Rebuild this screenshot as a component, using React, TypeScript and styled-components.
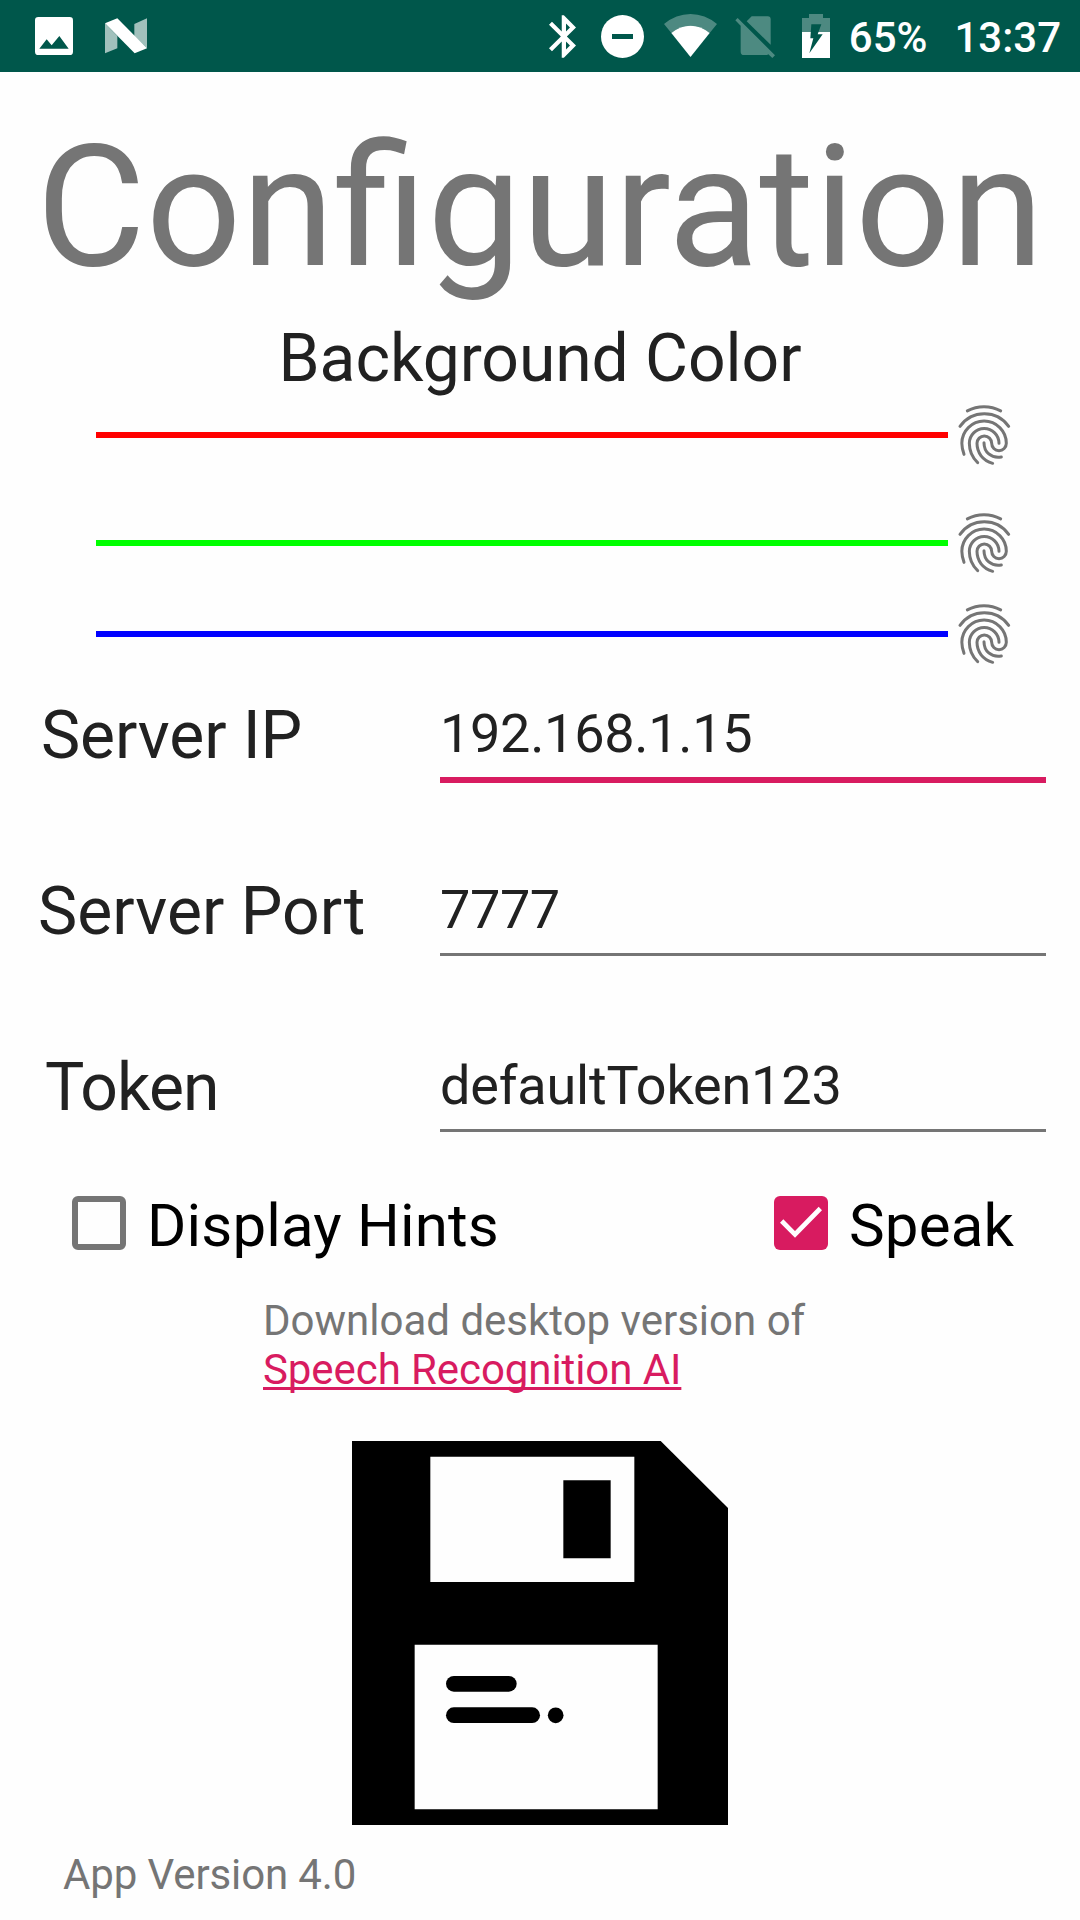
import React, { useState } from "react";
import styled, { createGlobalStyle } from "styled-components";

const GREEN = "#00574b";
const PINK = "#d81b60";
const GRAY = "#757575";
const INK = "#212121";

const GlobalStyle = createGlobalStyle`
  * { box-sizing: border-box; }
  body {
    margin: 0;
    background: #fefefe;
    font-family: Roboto, "Noto Sans", sans-serif;
  }
`;

const Screen = styled.div`
  width: 1080px;
  height: 1920px;
  overflow: hidden;
  display: flex;
  flex-direction: column;
  background: #fefefe;
`;

const StatusBar = styled.header`
  height: 72px;
  flex: none;
  display: flex;
  align-items: flex-start;
  padding: 0 19px 0 35px;
  background: ${GREEN};
  color: #fff;
`;

const Spacer = styled.div`
  flex: 1;
`;

const Glyph = styled.svg<{ $w: number; $h: number; $top: number; $right: number }>`
  display: block;
  flex: none;
  width: ${(p) => p.$w}px;
  height: ${(p) => p.$h}px;
  margin: ${(p) => p.$top}px ${(p) => p.$right}px 0 0;
`;

const StatusText = styled.span<{ $right?: number }>`
  font-size: 42px;
  font-weight: 500;
  line-height: 50px;
  margin-top: 13px;
  margin-right: ${(p) => p.$right ?? 0}px;
  white-space: nowrap;
`;

const Title = styled.h1`
  margin: 0;
  height: 230px;
  padding-top: 37px;
  font-size: 168px;
  font-weight: 400;
  line-height: 197px;
  text-align: center;
  white-space: nowrap;
  color: ${GRAY};
`;

const Subtitle = styled.h2`
  margin: 0;
  height: 97px;
  padding-top: 18px;
  font-size: 66px;
  font-weight: 400;
  line-height: 78px;
  letter-spacing: -0.06px;
  text-align: center;
  color: ${INK};
`;

const SliderRow = styled.div<{ $gap: number }>`
  display: flex;
  align-items: center;
  height: 72px;
  margin: 0 60px ${(p) => p.$gap}px 96px;
`;

const Track = styled.div<{ $color: string }>`
  flex: 1;
  height: 6px;
  background: ${(p) => p.$color};
`;

const Thumb = styled.svg`
  width: 72px;
  height: 72px;
  flex: none;
`;

const Form = styled.form`
  display: flex;
  flex-direction: column;
  padding-right: 34px;
`;

const Field = styled.div`
  display: flex;
  height: 176px;

  &:last-child {
    height: 140px;
  }
`;

const Label = styled.label<{ $indent: number; $tracking: number }>`
  width: 440px;
  padding-left: ${(p) => p.$indent}px;
  font-size: 66px;
  line-height: 73px;
  letter-spacing: ${(p) => p.$tracking}px;
  white-space: nowrap;
  color: ${INK};
`;

const Input = styled.input<{ $active?: boolean; $tracking: number }>`
  flex: 1;
  min-width: 0;
  height: ${(p) => (p.$active ? 84 : 81)}px;
  padding: 0 0 9px;
  border: 0;
  border-bottom: ${(p) => (p.$active ? `6px solid ${PINK}` : `3px solid ${GRAY}`)};
  outline: 0;
  border-radius: 0;
  background: transparent;
  font: 400 54px/64px Roboto, "Noto Sans", sans-serif;
  letter-spacing: ${(p) => p.$tracking}px;
  color: ${INK};
`;

const Options = styled.div`
  display: flex;
  justify-content: space-between;
  height: 78px;
  padding: 0 66px 0 72px;
`;

const Option = styled.label`
  display: flex;
  align-items: flex-start;
  font-size: 60px;
  line-height: 69px;
  letter-spacing: 0.16px;
  color: #000;
  white-space: nowrap;
`;

const Box = styled.button<{ $on: boolean }>`
  width: 54px;
  height: 54px;
  margin: 5px 21px 0 0;
  padding: 0;
  border: ${(p) => (p.$on ? "0" : `6px solid ${GRAY}`)};
  border-radius: 6px;
  background: ${(p) => (p.$on ? PINK : "transparent")};
  svg { display: block; }
`;

const Download = styled.p`
  margin: 0;
  height: 172px;
  padding: 27px 0 0 263px;
  font-size: 42px;
  line-height: 49px;
  color: ${GRAY};
`;

const Link = styled.a`
  color: ${PINK};
  letter-spacing: -0.08px;
  text-decoration: underline;
  text-decoration-thickness: 3px;
  text-underline-offset: 3px;
  text-decoration-skip-ink: none;
`;

const SaveButton = styled.button`
  display: block;
  align-self: center;
  margin: 0 0 25px;
  padding: 0;
  border: 0;
  background: none;
  svg { display: block; }
`;

const Version = styled.footer`
  padding-left: 63px;
  font-size: 42px;
  line-height: 49px;
  letter-spacing: -0.12px;
  color: ${GRAY};
`;

const Fingerprint = () => (
  <Thumb viewBox="54 27 216 216" fill="none" stroke={GRAY} strokeWidth="9" strokeLinecap="round">
    <path d="M112 62.500A108 108 0 0 1 212 62.500" />
    <path d="M90 109A89 89 0 0 1 236 109" />
    <path d="M102 193Q95.500 174 95.500 160A66.500 66.500 0 0 1 229 160A21.500 21.500 0 0 1 185 160A22 22 0 0 0 141 160C141 188 158 212 188 220" />
    <path d="M207 160A44.500 44.500 0 0 0 118 160C118 184 127 203 143 218" />
    <path d="M162 158C162 186 183 206 214 201" />
  </Thumb>
);

const Check = () => (
  <svg width="54" height="54" viewBox="102 78 162 162" fill="none" stroke="#fefefe" strokeWidth="14">
    <path d="M125 153L165 193L241 115.500" />
  </svg>
);

const Floppy = () => (
  <svg width="376" height="384" viewBox="66 63 1128 1152">
    <path d="M66 63H992L1194 264V1215H66Z" />
    <path fill="#fefefe" d="M301 110H913V486H301ZM254 674H983V1168H254Z" />
    <path d="M700 181H842V415H700Z" />
    <rect x="348" y="768" width="212" height="47" rx="23.500" />
    <rect x="348" y="862" width="282" height="47" rx="23.500" />
    <circle cx="677" cy="886" r="23.500" />
  </svg>
);

const StatusIcons = () => (
  <>
    <Glyph $w={27} $h={43} $top={15} $right={25} viewBox="5 2 12.71 20" fill="#fff">
      <path d="M17.71 7.71L12 2h-1v7.59L6.410 5 5 6.410 10.590 12 5 17.590 6.410 19 11 14.410V22h1l5.710-5.710-4.300-4.290 4.300-4.290zM13 5.830l1.880 1.880L13 9.590V5.830zm1.880 10.460L13 18.170v-3.760l1.880 1.880z" />
    </Glyph>
    <Glyph $w={43} $h={43} $top={15} $right={20} viewBox="213 45 129 129">
      <circle cx="277.500" cy="109.500" r="64.500" fill="#fff" />
      <path d="M246 102H309V117H246Z" fill={GREEN} />
    </Glyph>
    <Glyph $w={53} $h={43} $top={14} $right={18} viewBox="402 42 159 129" fill="#fff">
      <path d="M481.500 171L539 99Q513 77 481.500 77T424 99L402 72Q438 42 481.500 42T561 72L539 99Z" opacity=".3" />
      <path d="M481.500 171L424 99Q450 77 481.500 77T539 99Z" />
    </Glyph>
    <Glyph $w={40} $h={42} $top={16} $right={27} viewBox="615 48 120 126" fill="#fff" opacity=".3">
      <path d="M665 49H713Q722 49 722 58V134L650 64Z" />
      <path d="M616 61L623 54L735 166L727 174L715 163Q713 165 710 165H642Q632 165 632 155V77Z" />
    </Glyph>
    <Glyph $w={28} $h={44} $top={14} $right={19} viewBox="36 42 84 132" fill="#fff">
      <path opacity=".3" d="M57 54V42H99V54H120V96H36V54Z" />
      <path d="M36 96H120V174H36Z" />
      <path fill={GREEN} d="M64 73H94L83 103H98L58 160L70 115H61Z" />
    </Glyph>
  </>
);

const SLIDERS = [
  { color: "#ff0000", gap: 36 },
  { color: "#00ff00", gap: 19 },
  { color: "#0000ff", gap: 29 },
];

const FIELDS = [
  { id: "ip", label: "Server IP", value: "192.168.1.15", indent: 41, labelTracking: -0.1, tracking: -0.3, active: true },
  { id: "port", label: "Server Port", value: "7777", indent: 38, labelTracking: 0.05, tracking: -0.4, active: false },
  { id: "token", label: "Token", value: "defaultToken123", indent: 45, labelTracking: -0.9, tracking: -0.2, active: false },
];

export default function App() {
  const [hints, setHints] = useState(false);
  const [speak, setSpeak] = useState(true);
  return (
    <Screen>
      <GlobalStyle />
      <StatusBar>
        <Glyph $w={38} $h={38} $top={17} $right={32} viewBox="105 51 114 114">
          <rect x="105" y="51" width="114" height="114" rx="10" fill="#fff" />
          <path d="M118 146L140 118L155 136L178 108L206 146Z" fill={GREEN} />
        </Glyph>
        <Glyph $w={42} $h={36} $top={18} $right={0} viewBox="315 54 126 108" fill="#fff">
          <path opacity=".63" d="M315 70L352 108V145L315 160ZM403 72L441 55V145L403 108Z" />
          <path d="M315 70L352 55L441 145L404 160Z" />
        </Glyph>
        <Spacer />
        <StatusIcons />
        <StatusText $right={27}>65%</StatusText>
        <StatusText>13:37</StatusText>
      </StatusBar>
      <Title>Configuration</Title>
      <Subtitle>Background Color</Subtitle>
      {SLIDERS.map((s) => (
        <SliderRow key={s.color} $gap={s.gap}>
          <Track $color={s.color} />
          <Fingerprint />
        </SliderRow>
      ))}
      <Form>
        {FIELDS.map((f) => (
          <Field key={f.id}>
            <Label htmlFor={f.id} $indent={f.indent} $tracking={f.labelTracking}>{f.label}</Label>
            <Input id={f.id} defaultValue={f.value} $active={f.active} $tracking={f.tracking} spellCheck={false} />
          </Field>
        ))}
      </Form>
      <Options>
        <Option>
          <Box type="button" $on={hints} onClick={() => setHints(!hints)}>{hints && <Check />}</Box>
          Display Hints
        </Option>
        <Option>
          <Box type="button" $on={speak} onClick={() => setSpeak(!speak)}>{speak && <Check />}</Box>
          Speak
        </Option>
      </Options>
      <Download>
        Download desktop version of
        <br />
        <Link href="#">Speech Recognition AI</Link>
      </Download>
      <SaveButton type="button" aria-label="Save">
        <Floppy />
      </SaveButton>
      <Version>App Version 4.0</Version>
    </Screen>
  );
}
